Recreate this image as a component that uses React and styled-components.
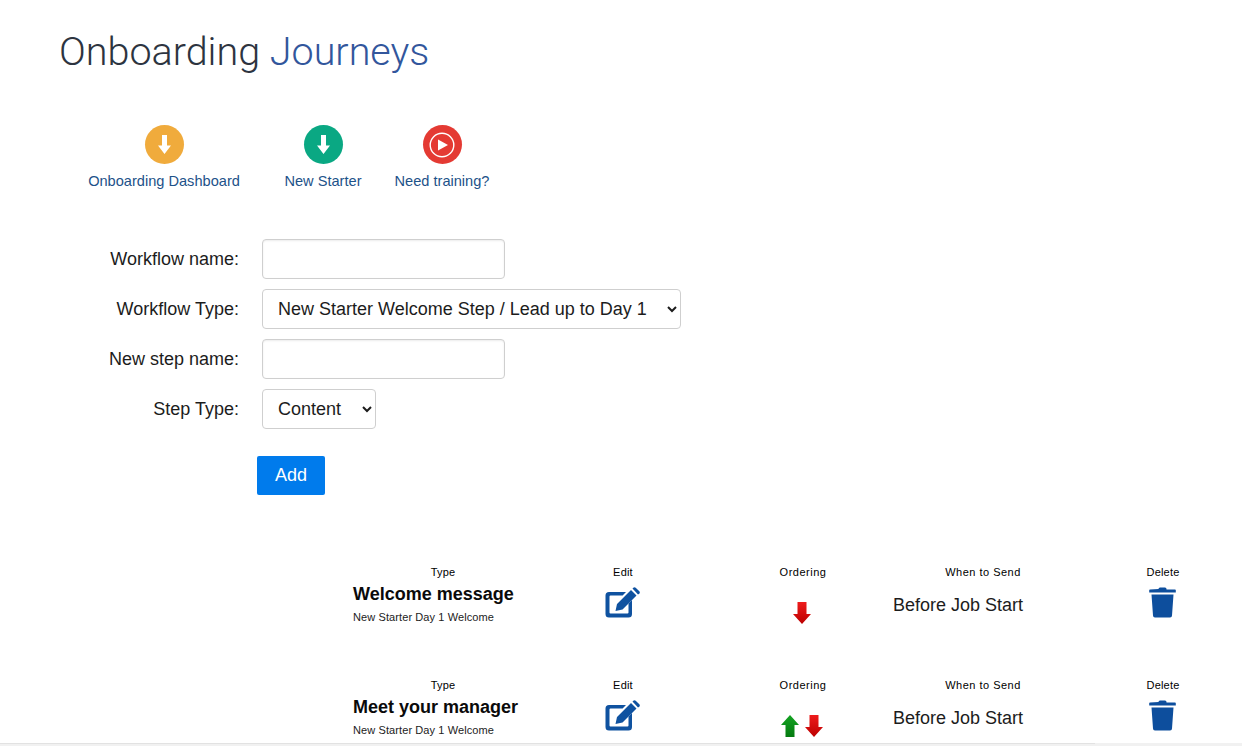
import styled, { createGlobalStyle } from "styled-components";

const GlobalStyle = createGlobalStyle`
    html, body {
        margin: 0;
        padding: 0;
        height: 746px;
        overflow: hidden;
        background: #fff;
        font-family: "Liberation Sans", Arial, sans-serif;
    }
`;

const Page = styled.div`
    width: 1242px;
    height: 746px;
    overflow: hidden;
    display: flex;
    flex-direction: column;
    > * {
        flex-shrink: 0;
    }
`;

const Title = styled.h1`
    margin: 0;
    padding: 29px 0 0 59px;
    height: 96px;
    box-sizing: border-box;
    font-family: Roboto, sans-serif;
    font-weight: 300;
    font-size: 39.5px;
    line-height: 46px;
    color: #2d3440;
    span {
        color: #32569c;
    }
`;

const Shortcuts = styled.div`
    display: flex;
    height: 115px;
    padding-top: 29px;
    box-sizing: border-box;
`;

const Shortcut = styled.a`
    width: ${(p) => p.$width}px;
    margin-left: ${(p) => p.$left}px;
    display: flex;
    flex-direction: column;
    align-items: center;
    font-size: 14.6px;
    line-height: 16px;
    color: #1d5289;
    white-space: nowrap;
`;

const Circle = styled.div`
    width: 39px;
    height: 39px;
    border-radius: 50%;
    background: ${(p) => p.$color};
    margin-bottom: 9px;
    display: flex;
    align-items: center;
    justify-content: center;
`;

const Form = styled.form`
    display: grid;
    grid-template-columns: 239px 1fr;
    column-gap: 23px;
    row-gap: 10px;
    align-items: center;
    justify-items: start;
    padding-top: 28px;
`;

const Label = styled.label`
    justify-self: end;
    font-size: 18px;
    line-height: 20px;
    color: #1c1c1c;
`;

const TextInput = styled.input`
    width: 243px;
    height: 40px;
    box-sizing: border-box;
    border: 1px solid #cfcfcf;
    border-radius: 4px;
    box-shadow: inset 0 1px 2px rgba(0, 0, 0, 0.08);
    background: #fff;
`;

const Select = styled.select`
    width: ${(p) => p.$width}px;
    height: 40px;
    box-sizing: border-box;
    padding: 0 11px;
    border: 1px solid #cfcfcf;
    border-radius: 4px;
    background: #fff;
    font-family: "Liberation Sans", Arial, sans-serif;
    font-size: 18px;
    color: #1c1c1c;
`;

const AddRow = styled.div`
    padding: 27px 0 0 257px;
    height: 39px;
`;

const AddButton = styled.button`
    width: 68px;
    height: 39px;
    border: 0;
    border-radius: 2px;
    background: #007bec;
    color: #fff;
    font-family: "Liberation Sans", Arial, sans-serif;
    font-size: 18px;
`;

const Steps = styled.div`
    flex: 1 0 0;
    min-height: 0;
    overflow: hidden;
    padding: 71px 0 0 353px;
`;

const StepRow = styled.div`
    display: grid;
    grid-template-columns: repeat(5, 180px);
    height: 113px;
`;

const Column = styled.div`
    display: flex;
    flex-direction: column;
`;

const Heading = styled.div`
    height: 12px;
    margin-bottom: 2px;
    text-align: center;
    font-size: 11px;
    line-height: 12px;
    letter-spacing: ${(p) => p.$spaced ? "0.5px" : "0.2px"};
    color: #000;
`;

const StepName = styled.div`
    font-size: 18px;
    font-weight: bold;
    line-height: 22px;
    margin-top: 3px;
    color: #0a0a0a;
`;

const StepSub = styled.div`
    font-size: 11px;
    line-height: 12px;
    letter-spacing: 0.1px;
    margin-top: 6px;
    color: #222;
`;

const IconCell = styled.div`
    display: flex;
    justify-content: center;
    align-items: flex-start;
    gap: 6px;
    padding-top: ${(p) => p.$top}px;
    padding-right: 2px;
`;

const WhenText = styled.div`
    font-size: 18px;
    line-height: 20px;
    margin-top: 15px;
    color: #1c1c1c;
`;

const ScrollTrack = styled.div`
    height: 3px;
    background: #f1f1f1;
`;

const ScrollThumb = styled.div`
    width: 1095px;
    height: 1px;
    background: #e2e2e2;
`;

const DownIcon = () => (
    <svg width="13" height="19" viewBox="0 0 13 19">
        <path d="M4 0h5v10.500h4L6.500 19 0 10.500h4z" fill="#fff" />
    </svg>
);

const PlayIcon = () => (
    <svg width="26" height="26" viewBox="0 0 26 26">
        <circle cx="13" cy="13" r="11.800" fill="none" stroke="#fff" strokeWidth="1.400" />
        <path d="M9 7.500v11l10-5.500z" fill="#fff" />
    </svg>
);

const EditIcon = () => (
    <svg width="35" height="31" viewBox="0 0 35 31">
        <path d="M4 5h17l-3.400 3.500H5.500a1 1 0 0 0-1 1v16a1 1 0 0 0 1 1h17a1 1 0 0 0 1-1v-9l3.500-3.500V27a3.500 3.500 0 0 1-3.500 3.500H4A3.500 3.500 0 0 1 .5 27V8.500A3.500 3.500 0 0 1 4 5z" fill="#0f52a0" />
        <path d="M26 3l5.500 5.500L17.500 22.500l-7 1.500 1.500-7zM27.500 1.500l.8-.8a1.800 1.800 0 0 1 2.400 0l3.600 3.600a1.800 1.800 0 0 1 0 2.400L33 7.500z" fill="#0f52a0" />
    </svg>
);

const TrashIcon = () => (
    <svg width="27" height="31" viewBox="0 0 27 31">
        <path d="M9.500 2a1.500 1.500 0 0 1 1.500-1.500h5A1.500 1.500 0 0 1 17.500 2v.500H26a.8.8 0 0 1 .8.8v2.200H.2V3.300a.8.8 0 0 1 .8-.8z" fill="#0d4e9d" />
        <path d="M2.500 7.500h22l-1.500 21a2 2 0 0 1-2 2H6a2 2 0 0 1-2-2z" fill="#0d4e9d" />
    </svg>
);

const Arrow = ({ up }) => (
    <svg width="18" height="22" viewBox="0 0 18 22">
        <defs>
            <linearGradient id="arrowUp" x1="0" y1="0" x2="0" y2="1">
                <stop offset="0" stopColor="#14a322" />
                <stop offset="1" stopColor="#057a10" />
            </linearGradient>
            <linearGradient id="arrowDown" x1="0" y1="0" x2="0" y2="1">
                <stop offset="0" stopColor="#ee1c1c" />
                <stop offset="1" stopColor="#bc0000" />
            </linearGradient>
        </defs>
        <path d={up ? "M9 0L18 10H13.500V22H4.500V10H0z" : "M4.500 0H13.500V12H18L9 22 0 12H4.500z"} fill={up ? "url(#arrowUp)" : "url(#arrowDown)"} />
    </svg>
);

const steps = [
    { name: "Welcome message", arrows: ["down"] },
    { name: "Meet your manager", arrows: ["up", "down"] },
];

const App = () => {
    return (
        <Page>
            <GlobalStyle />
            <Title>Onboarding <span>Journeys</span></Title>
            <Shortcuts>
                <Shortcut $left={79} $width={170}><Circle $color="#f0ab3c"><DownIcon /></Circle>Onboarding Dashboard</Shortcut>
                <Shortcut $left={0} $width={148}><Circle $color="#0aa883"><DownIcon /></Circle>New Starter</Shortcut>
                <Shortcut $left={0} $width={90}><Circle $color="#e43a33"><PlayIcon /></Circle>Need training?</Shortcut>
            </Shortcuts>
            <Form>
                <Label>Workflow name:</Label>
                <TextInput type="text" />
                <Label>Workflow Type:</Label>
                <Select $width={419} defaultValue="a"><option value="a">New Starter Welcome Step / Lead up to Day 1</option></Select>
                <Label>New step name:</Label>
                <TextInput type="text" />
                <Label>Step Type:</Label>
                <Select $width={114} defaultValue="a"><option value="a">Content</option></Select>
            </Form>
            <AddRow><AddButton type="button">Add</AddButton></AddRow>
            <Steps>
                {steps.map((step) => (
                    <StepRow key={step.name}>
                        <Column>
                            <Heading>Type</Heading>
                            <StepName>{step.name}</StepName>
                            <StepSub>New Starter Day 1 Welcome</StepSub>
                        </Column>
                        <Column>
                            <Heading>Edit</Heading>
                            <IconCell $top={7}><EditIcon /></IconCell>
                        </Column>
                        <Column>
                            <Heading $spaced>Ordering</Heading>
                            <IconCell $top={22}>
                                {step.arrows.map((a) => (
                                    <Arrow key={a} up={a === "up"} />
                                ))}
                            </IconCell>
                        </Column>
                        <Column>
                            <Heading $spaced>When to Send</Heading>
                            <WhenText>Before Job Start</WhenText>
                        </Column>
                        <Column>
                            <Heading>Delete</Heading>
                            <IconCell $top={7}><TrashIcon /></IconCell>
                        </Column>
                    </StepRow>
                ))}
            </Steps>
            <ScrollTrack><ScrollThumb /></ScrollTrack>
        </Page>
    );
};

export default App;
